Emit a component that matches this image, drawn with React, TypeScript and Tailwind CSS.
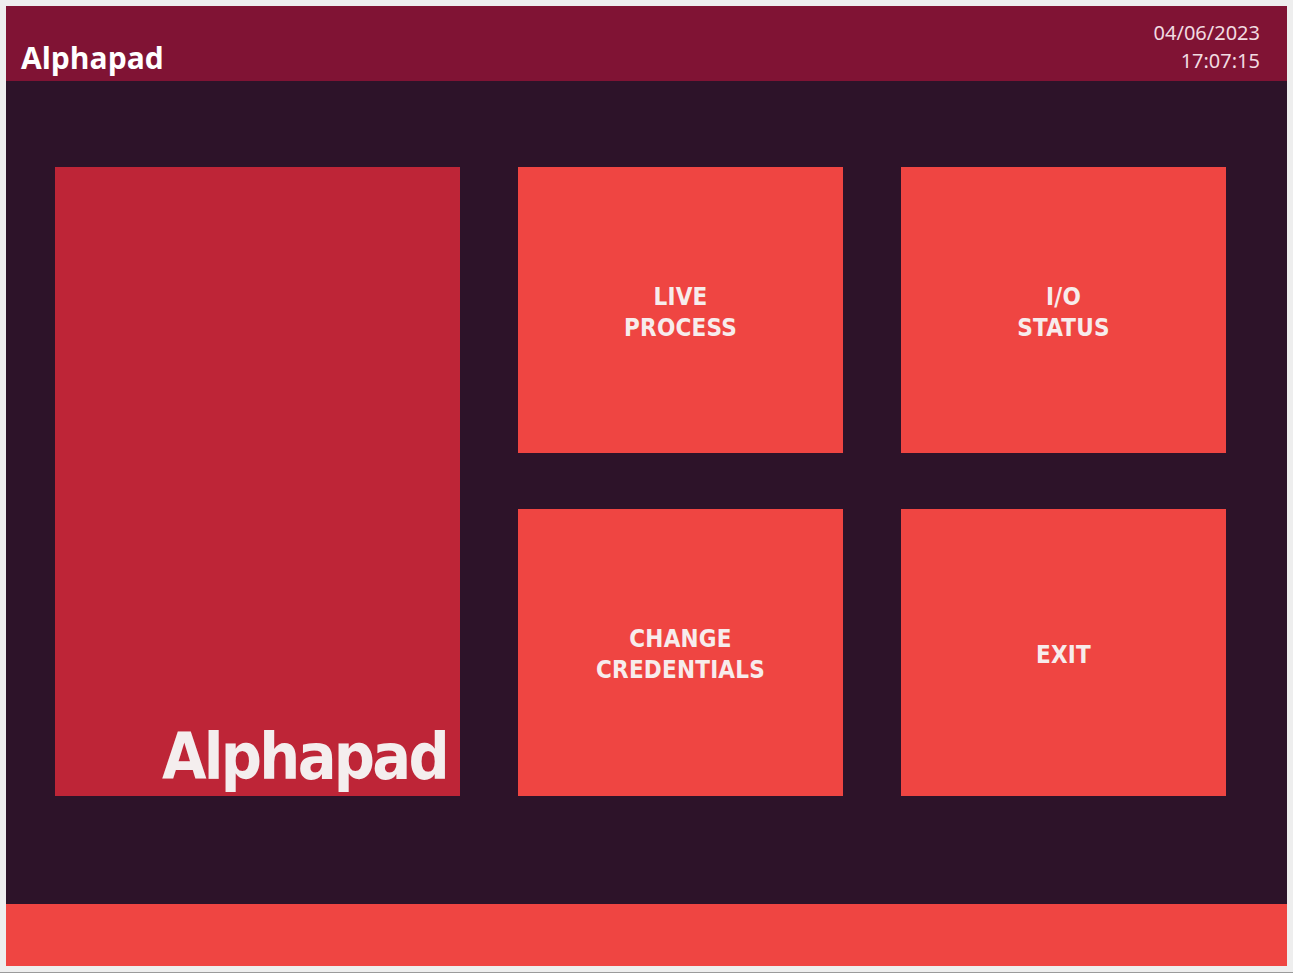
import React from "react";

const din = { fontFamily: '"DejaVu Sans Condensed", "Liberation Sans Narrow", sans-serif' } as React.CSSProperties;

function Tile({ lines }: { lines: string[] }) {
  return (
    <div className="bg-[#ef4542] flex items-center justify-center">
      <div
        className="text-center text-[#f7ecec] font-bold text-[24px] leading-[31px] mt-[5px] tracking-[0.2px]"
        style={din}
      >
        {lines.map((l) => (
          <div key={l}>{l}</div>
        ))}
      </div>
    </div>
  );
}

export default function App() {
  return (
    <div className="w-[1293px] h-[973px] bg-[#eeeeee] pt-[6px] pl-[6px] pr-[6px] pb-[6px] border-b border-[#9a9a9a]">
      <div className="w-full h-full flex flex-col">
        <header className="h-[75px] bg-[#801334] flex items-end justify-between px-[15px]">
          <div
            className="text-white font-bold text-[30px] leading-none pb-[8px]"
            style={{ fontFamily: '"Open Sans", "Noto Sans", sans-serif' }}
          >
            Alphapad
          </div>
          <div
            className="text-right text-[#f1dbe1] text-[20px] leading-[28px] pb-[6px] pr-[12px]"
            style={{ fontFamily: '"Noto Sans", "Open Sans", sans-serif' }}
          >
            <div>04/06/2023</div>
            <div>17:07:15</div>
          </div>
        </header>
        <main className="flex-1 bg-[#2d1329] pl-[49px] pt-[86px]">
          <div className="flex gap-[58px]">
            <div className="w-[405px] h-[629px] bg-[#be2537] flex items-end justify-end pr-[13px] pb-[7px]">
              <span
                className="text-[#f4eeee] font-bold text-[64px] leading-none tracking-[-2.7px]"
                style={din}
              >
                Alphapad
              </span>
            </div>
            <div className="grid grid-cols-[325px_325px] grid-rows-[286px_287px] gap-x-[58px] gap-y-[56px]">
              <Tile lines={["LIVE", "PROCESS"]} />
              <Tile lines={["I/O", "STATUS"]} />
              <Tile lines={["CHANGE", "CREDENTIALS"]} />
              <Tile lines={["EXIT"]} />
            </div>
          </div>
        </main>
        <footer className="h-[62px] bg-[#ef4542]" />
      </div>
    </div>
  );
}
